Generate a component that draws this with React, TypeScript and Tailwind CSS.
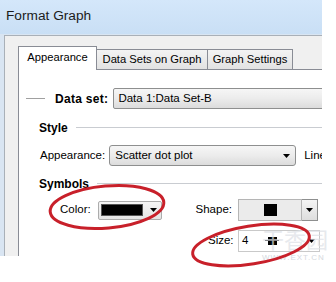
import React from "react";

function Caret({ className = "" }: { className?: string }) {
  return (
    <svg width="7" height="4" viewBox="0 0 7 4" className={className}>
      <polygon points="0,0 7,0 3.5,4" fill="#000" />
    </svg>
  );
}

function SectionHead({ title, className = "" }: { title: string; className?: string }) {
  return (
    <div className={`flex items-center pl-[20px] ${className}`}>
      <span className="text-[12px] font-bold leading-[14px] whitespace-nowrap">{title}</span>
      <div className="flex-1 ml-[8px] border-t border-[#c9ccd1] border-b border-b-white" />
    </div>
  );
}

export default function App() {
  return (
    <div className="w-[336px] h-[282px] bg-white relative overflow-hidden font-['Liberation_Sans',Arial,sans-serif] text-[11.5px] text-black">
      <div className="w-[322px] h-[256px] flex flex-col bg-[#d9e5f2] overflow-hidden">
        {/* title bar */}
        <div className="h-[34px] shrink-0 bg-gradient-to-b from-[#d4e7fa] to-[#c9dff5] flex items-center pl-[6px] pb-[2px] text-[13.7px] text-[#1b1b1b]">
          Format Graph
        </div>

        {/* client area */}
        <div className="flex-1 ml-[4px] mt-[1px] border-t border-l border-[#a9b0b8] bg-[#f0f0f0] flex flex-col pt-[10px] pl-[13px] min-h-0">
          {/* tabs */}
          <div className="flex items-end h-[24px] -mb-px relative z-10 shrink-0">
            <div className="h-[24px] w-[79px] bg-white border border-b-0 border-[#898c95] flex items-center justify-center pb-[2px] text-[11.2px]">
              Appearance
            </div>
            <div className="h-[21px] w-[111px] bg-gradient-to-b from-[#f3f3f3] to-[#e2e2e2] border border-l-0 border-[#898c95] flex items-center justify-center text-[11.2px]">
              Data Sets on Graph
            </div>
            <div className="h-[21px] w-[85px] bg-gradient-to-b from-[#f3f3f3] to-[#e2e2e2] border border-l-0 border-[#898c95] flex items-center justify-center text-[11.2px]">
              Graph Settings
            </div>
          </div>

          {/* panel */}
          <div className="flex-1 bg-white border-t border-l border-[#898c95] flex flex-col min-h-0 w-[320px]">
            {/* data set row */}
            <div className="flex items-center h-[21px] mt-[18px] shrink-0">
              <div className="ml-[7px] w-[19px] shrink-0 border-t border-[#a0a0a0]" />
              <span className="ml-[10px] shrink-0 whitespace-nowrap text-[12px] font-bold tracking-[0.3px]">Data set:</span>
              <div className="ml-[5px] h-[21px] w-[230px] shrink-0 border border-[#8e8f8f] rounded-[2px] bg-gradient-to-b from-[#f6f6f6] via-[#ececec] to-[#dcdcdc] flex items-center pl-[4px] whitespace-nowrap">
                Data 1:Data Set-B
              </div>
            </div>

            <SectionHead title="Style" className="mt-[12px]" />

            {/* appearance row */}
            <div className="flex items-center h-[21px] mt-[10px] pl-[21px] shrink-0">
              <span className="shrink-0">Appearance:</span>
              <div className="ml-[4px] h-[21px] w-[187px] shrink-0 border border-[#8e8f8f] rounded-[3px] bg-gradient-to-b from-[#f6f6f6] via-[#ececec] to-[#dcdcdc] flex items-center pl-[5px] pr-[5px] justify-between">
                <span>Scatter dot plot</span>
                <Caret />
              </div>
              <span className="ml-[8px] shrink-0 whitespace-nowrap">Line</span>
            </div>

            <SectionHead title="Symbols" className="mt-[11px]" />

            {/* symbols body */}
            <div className="flex mt-[8px]">
              <div className="w-[176px] pl-[41px] flex items-center h-[22px] shrink-0">
                <span>Color:</span>
                <div className="ml-[7px] h-[19px] w-[64px] border border-[#acacac] rounded-[2px] bg-gradient-to-b from-[#f5f5f5] to-[#e4e4e4] flex items-center pl-[2px] pr-[4px] justify-between">
                  <div className="w-[42px] h-[12px] bg-black border border-[#555]" />
                  <Caret />
                </div>
              </div>
              <div className="grid grid-cols-[37px_auto] gap-x-[6px] gap-y-[9px] items-center">
                <span className="text-right">Shape:</span>
                <div className="flex h-[22px]">
                  <div className="w-[64px] h-[22px] bg-[#ebebeb] border border-[#b5b5b5] flex items-center justify-center">
                    <div className="w-[13px] h-[12px] bg-black" />
                  </div>
                  <div className="w-[16px] h-[22px] bg-gradient-to-b from-[#f4f4f4] to-[#dedede] border border-l-0 border-[#8e8f8f] flex items-center justify-center">
                    <Caret />
                  </div>
                </div>
                <span className="text-right pl-[13px]">Size:</span>
                <div className="w-[82px] h-[22px] bg-white border border-[#c9c9c9] flex items-center pl-[3px] pr-[4px]">
                  <span>4</span>
                  <div className="ml-[17px] relative w-[14px] h-[8px] flex items-center justify-center">
                    <div className="absolute left-0 right-0 top-[3px] h-[1px] bg-black" />
                    <div className="w-[9px] h-[8px] bg-black" />
                  </div>
                  <div className="flex-1" />
                  <Caret />
                </div>
              </div>
            </div>
          </div>
        </div>
      </div>

      {/* watermark */}
      <div className="absolute left-[262px] top-[226px] text-[22px] leading-[24px] text-[#dde1e6] font-['Noto_Sans_CJK_SC',sans-serif] opacity-70">
        干香园
      </div>
      <div className="absolute left-[262px] top-[252px] text-[8px] tracking-[1px] text-[#d5d9de]">
        WWW.EXT.CN
      </div>

      {/* red annotation ellipses */}
      <svg className="absolute left-0 top-0" width="336" height="282" viewBox="0 0 336 282">
        <ellipse cx="107" cy="207" rx="57" ry="21" transform="rotate(-5 107 207)" fill="none" stroke="#c8202a" strokeWidth="3" />
        <ellipse cx="251" cy="245" rx="59" ry="19" transform="rotate(-9 251 245)" fill="none" stroke="#c8202a" strokeWidth="3" />
      </svg>
    </div>
  );
}
